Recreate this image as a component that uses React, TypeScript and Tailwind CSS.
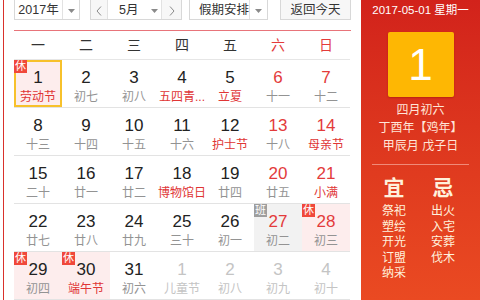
import React from "react";

type Day = {
  n: number;
  l: string;
  red?: boolean;
  fest?: boolean;
  other?: boolean;
  badge?: "休" | "班";
  bg?: string;
  sel?: boolean;
};

const rows: Day[][] = [
  [
    { n: 1, l: "劳动节", fest: true, badge: "休", sel: true },
    { n: 2, l: "初七" },
    { n: 3, l: "初八" },
    { n: 4, l: "五四青...", fest: true },
    { n: 5, l: "立夏", fest: true },
    { n: 6, l: "十一", red: true },
    { n: 7, l: "十二", red: true },
  ],
  [
    { n: 8, l: "十三" },
    { n: 9, l: "十四" },
    { n: 10, l: "十五" },
    { n: 11, l: "十六" },
    { n: 12, l: "护士节", fest: true },
    { n: 13, l: "十八", red: true },
    { n: 14, l: "母亲节", red: true, fest: true },
  ],
  [
    { n: 15, l: "二十" },
    { n: 16, l: "廿一" },
    { n: 17, l: "廿二" },
    { n: 18, l: "博物馆日", fest: true },
    { n: 19, l: "廿四" },
    { n: 20, l: "廿五", red: true },
    { n: 21, l: "小满", red: true, fest: true },
  ],
  [
    { n: 22, l: "廿七" },
    { n: 23, l: "廿八" },
    { n: 24, l: "廿九" },
    { n: 25, l: "三十" },
    { n: 26, l: "初一" },
    { n: 27, l: "初二", red: true, badge: "班", bg: "gray" },
    { n: 28, l: "初三", red: true, badge: "休", bg: "pink" },
  ],
  [
    { n: 29, l: "初四", badge: "休", bg: "pink" },
    { n: 30, l: "端午节", fest: true, badge: "休", bg: "pink" },
    { n: 31, l: "初六" },
    { n: 1, l: "儿童节", other: true },
    { n: 2, l: "初八", other: true },
    { n: 3, l: "初九", other: true },
    { n: 4, l: "初十", other: true },
  ],
];

const Tri = () => (
  <svg width="7" height="4" viewBox="0 0 7 4">
    <path d="M0 0H7L3.5 4Z" fill="#8a8a8a" />
  </svg>
);

const Chev = ({ dir }: { dir: "l" | "r" }) => (
  <svg width="6" height="10" viewBox="0 0 6 10">
    <polyline
      points={dir === "l" ? "5,0.5 1,5 5,9.5" : "1,0.5 5,5 1,9.5"}
      fill="none"
      stroke="#8a8a8a"
      strokeWidth="1"
    />
  </svg>
);

function Cell({ d }: { d: Day }) {
  let bg = "bg-white";
  if (d.sel || d.bg === "pink") bg = "bg-[#fdeded]";
  if (d.bg === "gray") bg = "bg-[#f2f2f2]";
  let numColor = "text-[#222222]";
  if (d.red) numColor = "text-[#e33b3b]";
  if (d.other) numColor = "text-[#c4c4c4]";
  let lunColor = "text-[#939393]";
  if (d.fest) lunColor = "text-[#e03535]";
  if (d.other) lunColor = "text-[#c4c4c4]";
  return (
    <div className={`relative w-[48px] h-full flex flex-col items-center pt-[8px] ${bg}`}>
      <div className={`text-[17px] leading-[20px] ${numColor}`}>{d.n}</div>
      <div className={`text-[12px] leading-[14px] mt-[2px] whitespace-nowrap ${lunColor}`}>{d.l}</div>
      {d.sel && <div className="absolute inset-0 border-2 border-[#f7c12b]" />}
      {d.badge && (
        <div
          className={`absolute left-0 top-0 w-[13px] h-[13px] flex items-center justify-center text-[11px] leading-[13px] text-white ${
            d.badge === "休" ? "bg-[#f0483b]" : "bg-[#9e9e9e]"
          }`}
        >
          {d.badge}
        </div>
      )}
    </div>
  );
}

export default function App() {
  const font = "font-['Liberation_Sans','Noto_Sans_CJK_SC',sans-serif]";
  return (
    <div className={`flex w-[480px] h-[300px] overflow-hidden bg-white ${font}`}>
      <div className="ml-[3px] w-[358px] h-full border-l border-[#d9312b] pl-[10px] shrink-0">
        {/* controls */}
        <div className="flex h-[22px] -mt-[2px] text-[12.5px] text-[#333333]">
          <div className="flex w-[66px] border border-[#d8d8d8] bg-white">
            <div className="flex-1 flex items-center justify-center pt-[3px] border-r border-[#e2e2e2]">2017年</div>
            <div className="w-[16px] flex items-center justify-center pt-[3px]"><Tri /></div>
          </div>
          <div className="flex w-[92px] ml-[10px] border border-[#d8d8d8] bg-white">
            <div className="w-[17px] flex items-center justify-center pt-[3px] bg-[#f7f7f7] border-r border-[#e2e2e2]"><Chev dir="l" /></div>
            <div className="flex-1 flex items-center pl-[11px] pt-[3px]">5月</div>
            <div className="w-[14px] flex items-center justify-center pt-[3px]"><Tri /></div>
            <div className="w-[20px] flex items-center justify-center pt-[3px] bg-[#f7f7f7] border-l border-[#e2e2e2]"><Chev dir="r" /></div>
          </div>
          <div className="flex w-[79px] ml-[7px] border border-[#d8d8d8] bg-white">
            <div className="flex-1 flex items-center pl-[9px] pt-[3px] border-r border-[#e2e2e2]">假期安排</div>
            <div className="w-[17px] flex items-center justify-center pt-[3px]"><Tri /></div>
          </div>
          <div className="flex w-[71px] ml-[12px] border border-[#d8d8d8] bg-[#f7f7f7] items-center justify-center pt-[3px]">
            返回今天
          </div>
        </div>
        {/* red line */}
        <div className="mt-[10px] w-[337px] h-px bg-[#e8747a]" />
        {/* weekday header */}
        <div className="flex w-[336px] h-[29px] border-b border-[#e6e6e6] text-[14px] text-[#333333]">
          {["一", "二", "三", "四", "五", "六", "日"].map((w, i) => (
            <div
              key={w}
              className={`w-[48px] flex items-center justify-center ${i >= 5 ? "text-[#e33b3b]" : ""}`}
            >
              {w}
            </div>
          ))}
        </div>
        {rows.map((r, i) => (
          <div key={i} className="flex w-[336px] h-[48px] border-b border-[#e3e3e3]">
            {r.map((d, j) => (
              <Cell key={j} d={d} />
            ))}
          </div>
        ))}
      </div>
      <div className="w-[119px] h-full shrink-0 bg-gradient-to-b from-[#d2221b] to-[#ea4a22] flex flex-col items-center text-[#ffe6d9]">
        <div className="h-[20px] leading-[20px] text-[11.5px] text-white">2017-05-01 星期一</div>
        <div className="mt-[12px] w-[66px] h-[65px] rounded-[2px] bg-[#feb703] shadow-[0_1px_2px_rgba(120,0,0,0.35)] flex items-center justify-center text-white text-[44px] leading-none">
          1
        </div>
        <div className="mt-[4px] text-[12px] leading-[18px] text-center">
          <div>四月初六</div>
          <div>丁酉年【鸡年】</div>
          <div>甲辰月 戊子日</div>
        </div>
        <div className="mt-[9px] w-[97px] h-px bg-[#f08a78]" />
        <div className="mt-[11px] w-full flex pl-[11px] gap-[5px] text-[#fff1dc]">
          <div className="w-[44px] flex flex-col items-center">
            <div className="text-[21px] leading-[24px] font-semibold">宜</div>
            <div className="mt-[4px] text-[12px] leading-[15.5px] flex flex-col items-center">
              <div>祭祀</div>
              <div>塑绘</div>
              <div>开光</div>
              <div>订盟</div>
              <div>纳采</div>
            </div>
          </div>
          <div className="w-[44px] flex flex-col items-center">
            <div className="text-[21px] leading-[24px] font-semibold">忌</div>
            <div className="mt-[4px] text-[12px] leading-[15.5px] flex flex-col items-center">
              <div>出火</div>
              <div>入宅</div>
              <div>安葬</div>
              <div>伐木</div>
            </div>
          </div>
        </div>
      </div>
    </div>
  );
}
